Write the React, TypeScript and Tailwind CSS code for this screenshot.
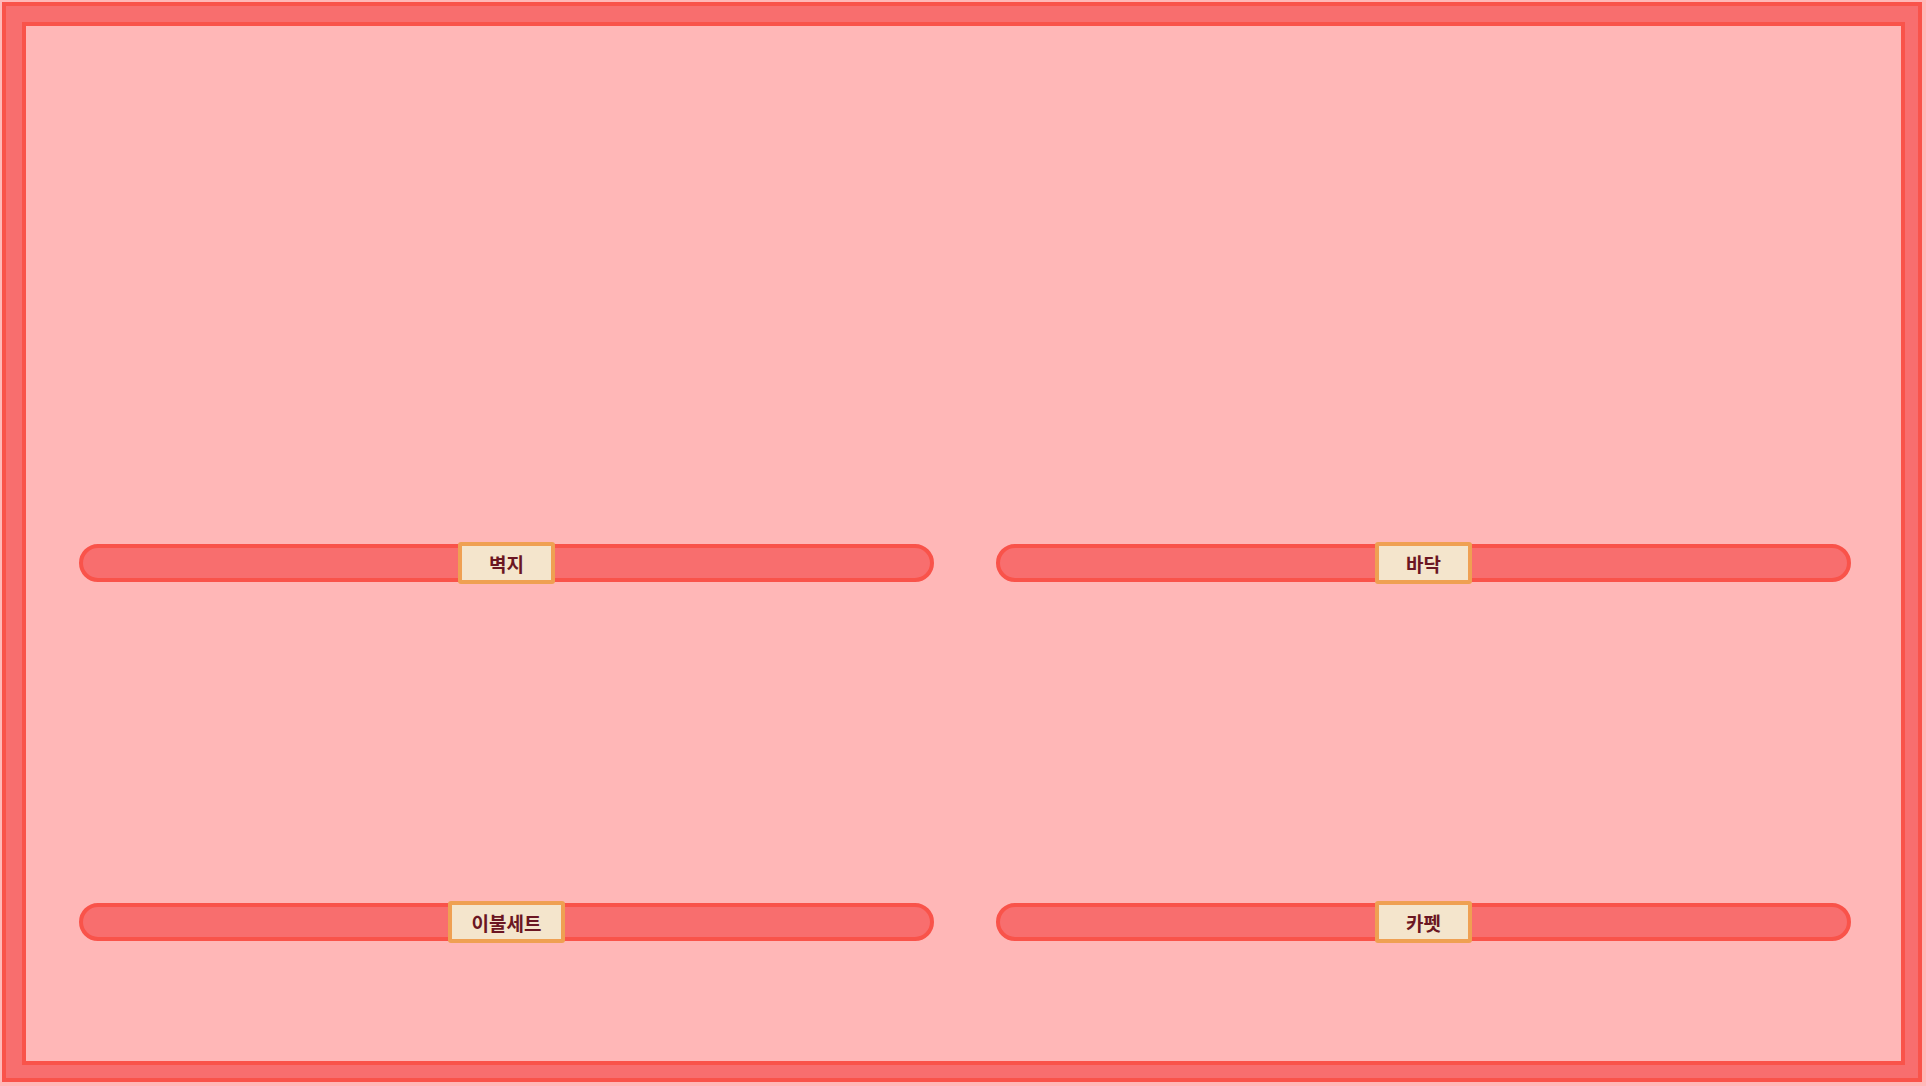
import React from "react";

const font = { fontFamily: '"Noto Sans CJK KR", "Noto Sans", sans-serif' };

function Bar({ label }: { label: string }) {
  return (
    <div className="relative flex h-[38px] items-center justify-center">
      <div className="absolute inset-0 rounded-full border-4 border-[#f9534a] bg-[#f86e6e]" />
      <div
        className="relative flex h-[42px] min-w-[97px] items-center justify-center rounded-[3px] border-4 border-[#efa052] bg-[#f4e5cc] px-[20px] text-[19px] font-bold leading-none text-[#6b1622]"
        style={font}
      >
        {label}
      </div>
    </div>
  );
}

export default function App() {
  return (
    <div className="h-[1086px] w-[1926px] bg-[#ffb8b8] pl-[2px] pt-[2px]">
      <div className="flex h-[1080px] w-[1920px] flex-col border-4 border-[#f9534a] bg-[#f86e6e] pt-[16px] pl-[16px] pr-[13px] pb-[13px]">
        <div className="flex flex-1 flex-col border-4 border-[#f9534a] bg-[#ffb7b7] pl-[53px] pr-[50px] pt-[518px]">
          <div className="grid grid-cols-2 gap-x-[62px]">
            <Bar label="벽지" />
            <Bar label="바닥" />
          </div>
          <div className="mt-[321px] grid grid-cols-2 gap-x-[62px]">
            <Bar label="이불세트" />
            <Bar label="카펫" />
          </div>
        </div>
      </div>
    </div>
  );
}
